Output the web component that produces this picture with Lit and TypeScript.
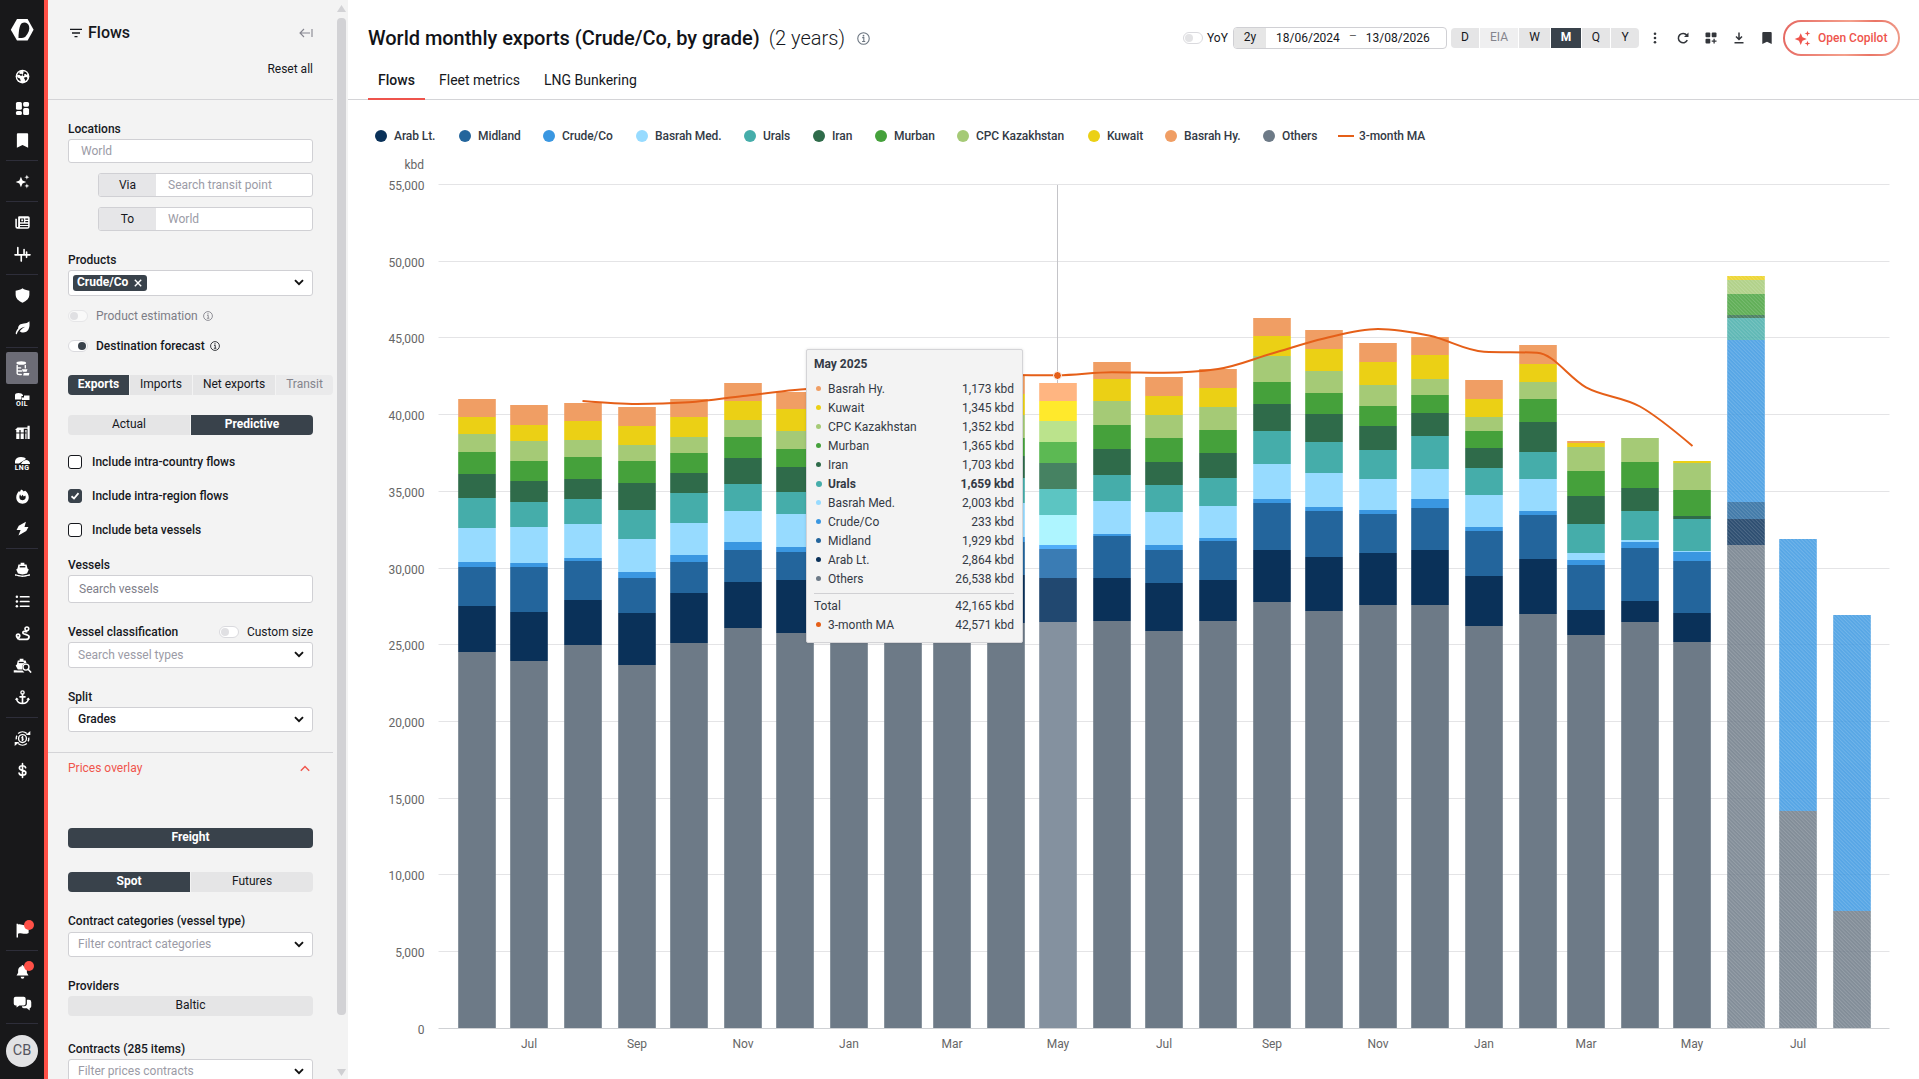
import { LitElement, html, svg, css, nothing } from "lit";
import { customElement } from "lit/decorators.js";
import { unsafeSVG } from "lit/directives/unsafe-svg.js";
import { classMap } from "lit/directives/class-map.js";

/* ---------- icons ---------- */

const ICONS: Record<string, string> = {
  logo: `<path d="M7 1h10.600l6 10.800-6 10.800H7L.8 11.800z"/><path fill="#18181a" d="M11.700 5.200C14.500 3.500 18 4.500 19 8c1 3.500-.5 7-3.300 10.200-1.500 1.700-4 1.900-7.200 1.800 0-5 .7-12.600 3.200-14.800z"/>`,
  globe: `<circle cx="12" cy="12" r="11"/><path fill="#18181a" d="M9 3.500 6.500 6l1.300 2 2.700-.5 1.500 2.500-2.500 1-2.500-2-3.500.5c-.3 2 .5 3.500 1.500 4.500l3 1.200 1.200 4.300c-1.500-.5-4-1.500-5.500-4.500A9.500 9.500 0 0 1 9 3.500zM13.500 3.500l4 1.300 2.500 3.200-1.500 1.500-1.200-1.500-2.800.4.500 2.300-1.500.8-1.500-2.500 1.500-2.500zM14.800 13.500l3.500-.8 1.700 1.500-1.500 3.300-2.500 1.700-.3-2.900-1.200-1.200z"/>`,
  dash: `<rect x="1.500" y="1.500" width="9.500" height="12.500" rx="2.500"/><rect x="13" y="1.500" width="9.500" height="7.500" rx="2.500"/><rect x="1.500" y="16" width="9.500" height="6.500" rx="2.500"/><rect x="13" y="11" width="9.500" height="11.500" rx="2.500"/>`,
  bookmark: `<path d="M4.500 .5h15A1.500 1.500 0 0 1 21 2v21.500l-9-4.500-9 4.500V2A1.500 1.500 0 0 1 4.500 .5z"/>`,
  sparkle: `<path d="M9.500 4.500 12 10.300l6 2.400-6 2.400-2.500 6-2.500-6-6-2.400 6-2.400zM19 1l1 2.900 3 1.100-3 1.100L19 9l-1-2.900L15 5l3-1.100zM19 15l1 2.900 3 1.100-3 1.100-1 2.900-1-2.900-3-1.100 3-1.100z"/>`,
  news: `<path fill-rule="evenodd" d="M6.500 2H21a2.500 2.500 0 0 1 2.500 2.500v14A3.500 3.500 0 0 1 20 22H4a3.500 3.500 0 0 1-3.500-3.500V6H3v12.300a1 1 0 0 0 2 0V3.500A1.500 1.500 0 0 1 6.500 2zM8 5.500v6h6.500v-6zm8.500 0v2H21v-2zm0 4v2H21v-2zM8 14v2h13v-2zm0 3.500v2h13v-2z"/><rect x="10" y="7" width="3" height="3"/>`,
  pulse: `<path fill="none" stroke="#fff" stroke-width="2.600" stroke-linecap="round" d="M0 12.500h24M4.500 1v11.500M10 12.500v10M14.500 4v8.500M18.500 8v8.500"/>`,
  shield: `<path d="M12 .5c3 2.200 6 3.200 11 3.700v6.300c0 6-4.500 10.500-11 13-6.500-2.500-11-7-11-13V4.200C6 3.700 9 2.700 12 .5z"/>`,
  leaf: `<path d="M23 2c1.400 11-2 18-10 18-2.500 0-4-.8-5.500-2 3-3.500 5.500-5.500 9-7.200-5 .8-9 3.200-12.300 8.200L2.600 23 1 21.500C1.500 18 3 15.500 5 13.500 5 8 9 5.800 14 5.500c4-.2 6-1 9-3.500z"/>`,
  barrel: `<ellipse cx="10" cy="3.200" rx="7.800" ry="2.800"/><path fill="none" stroke="#fff" stroke-width="2.200" stroke-linecap="round" d="M3.500 7v12.500q0 2 4 2H10M16.500 7v4M5 11h4M5.500 16h5"/><path d="M11 13h9l-1.500 4H12.500zM14 19h9l-1 4h-9z"/>`,
  silos: `<path d="M2 8h5v14.500H2zM9 8h5v14.500H9zM16.500 8h2v14.500h-2zM20 1h3.500v21.500H20zM0 8l4-4h16v2H14v2z"/><path fill="#18181a" d="M1 12h17.500v1.500H1z"/>`,
  fire: `<path fill-rule="evenodd" d="M9.500 1c2 0 3 1 4.300 3 .8-1 1.700-1.400 2.700-1.400C20.500 6 22 9.500 22 13.500c0 5.500-4.500 10-10 10s-10-4.500-10-10C2 9 4 6 6 3.500l2 1zM8 8.500c-2.200 5-.5 9.500 4.200 9.500 4 0 6-4 4.300-7.500L14 12l-2-3-2 3z"/>`,
  bolt: `<path d="M17.500 1 6 7.500 2.500 14.500H9L5.500 23 18 16l3.500-6.500h-6.300z"/>`,
  ship: `<path d="M9 1h6v3h3.500l1.500 6.500 2 1.500-2.800 6.500c-3 0-3.500 1.500-7.200 1.500s-4-1.500-7.200-1.500L2 12l2-1.500L5.500 4H9zM0 19.500c4 0 5.500 2 12 2s8-2 12-2V22c-4 0-5.500 1.800-12 1.800S4 22 0 22z"/><path fill="#18181a" d="M7.500 6.500h9v2.200h-9z"/>`,
  list: `<circle cx="3" cy="4.500" r="2"/><circle cx="3" cy="12" r="2"/><circle cx="3" cy="19.500" r="2"/><rect x="7.500" y="3.200" width="16" height="2.400" rx="1"/><rect x="7.500" y="10.800" width="16" height="2.400" rx="1"/><rect x="7.500" y="18.300" width="16" height="2.400" rx="1"/>`,
  route: `<circle cx="19" cy="4.500" r="3" fill="none" stroke="#fff" stroke-width="2.600"/><path fill="none" stroke="#fff" stroke-width="2.800" stroke-linecap="round" d="M18.500 9c-3-1-6-.5-6 2s10 2.500 10 6-3 4.500-5.500 4.500H7"/><path d="M5 11.500c2.600 0 4 1.800 4 4 0 2.600-2.500 5-4 7-1.500-2-4-4.400-4-7 0-2.200 1.400-4 4-4z"/><circle cx="5" cy="15.500" r="1.300" fill="#18181a"/>`,
  shipsearch: `<path d="M7.500 1h6v3H17l1.500 4.500C13 8 10 12 12 18.500H4.500L1 12l2-1.500L4.500 4h3zM-2 19.500c4 0 5.500.6 14 .6l3 3.200H-2z"/><path fill="#18181a" d="M6 6.200h8v2H6z"/><circle cx="17.500" cy="14.500" r="4.800" fill="#18181a" stroke="#fff" stroke-width="2.200"/><path stroke="#fff" stroke-width="2.600" stroke-linecap="round" d="m21 18 4 4.500"/>`,
  anchor: `<circle cx="12" cy="4" r="2.600" fill="none" stroke="#fff" stroke-width="2.200"/><path fill="none" stroke="#fff" stroke-width="2.600" stroke-linecap="round" d="M12 7v14M8 11h8M2.500 14.500c1 4.500 4.500 7 9.500 7s8.500-2.500 9.500-7"/><path d="m0 16 2.500-4L6 15zM24 16l-2.500-4L18 15z"/>`,
  coin: `<circle cx="12" cy="12" r="6.300" fill="none" stroke="#fff" stroke-width="2.200"/><path fill="none" stroke="#fff" stroke-width="1.800" d="M13.500 10c-2.500-1.500-3.500 1-1.500 2s1 3.300-1.500 2M12 8v8"/><path fill="none" stroke="#fff" stroke-width="2.200" d="M5 4A10.800 10.800 0 0 1 19 4M19 20a10.800 10.800 0 0 1-14 0M3 7.500a10 10 0 0 0-1 6M21 16.500a10 10 0 0 0 1-6"/><path d="M17 6.500h7.500V0zM7 17.500H-.5V24z"/>`,
  dollar: `<path fill="none" stroke="#fff" stroke-width="2.600" stroke-linecap="round" d="M12 1v22M17 7.500C16.500 5.500 15 4.400 12 4.400c-3.500 0-5 1.600-5 3.600 0 5.500 10.400 2 10.400 7.600 0 2.400-2 4-5.400 4-3.200 0-5-1.300-5.500-3.600"/>`,
  flag: `<path d="M2.500 1h2.300v1.500c4-1.500 7 1 10 1 2.500 0 4-.8 7-2V16c-3 1.400-5 1.700-8 1-3-.8-5.500-1.200-9 0v6H2.500z"/>`,
  bell: `<path d="M12 1.500c.9 0 1.500.6 1.500 1.500v.7c3.400.7 5.500 3.300 5.500 6.800v3.500l2.500 4.500H2.500L5 14v-3.500c0-3.500 2.100-6.100 5.500-6.800V3c0-.9.600-1.500 1.500-1.500zM9 20.500h6a3 3 0 0 1-6 0z"/>`,
  chat: `<path d="M1 1h13a3 3 0 0 1 3 3v8a3 3 0 0 1-3 3H7l-4.500 3.500V15H1a3 3 0 0 1-3-3V4a3 3 0 0 1 3-3z"/><path d="M19 6h3.500A3.500 3.500 0 0 1 26 9.500v7c0 1.800-1.200 3-2.500 3V23l-4.500-3.500h-5c-1.600 0-3-1-3-3H14.500c3 0 4.500-1.500 4.500-4z"/>`,
};

const icon = (name: string, size = 16, cls = "") =>
  html`<svg class="ico ${cls}" width=${size} height=${size} viewBox="0 0 24 24">${unsafeSVG(ICONS[name])}</svg>`;

const infoIcon = (size: number, color: string) => html`
  <svg class="ico" width=${size} height=${size} viewBox="0 0 12 12">
    <circle cx="6" cy="6" r="5.300" fill="none" stroke=${color} stroke-width="1" />
    <path d="M4.800 5.200h1.500v3.400M4.700 8.700h2.900" fill="none" stroke=${color} stroke-width="1" />
    <circle cx="6" cy="3.400" r="0.800" fill=${color} />
  </svg>`;

const chevron = html`<svg class="chev" width="10" height="7" viewBox="0 0 10 7">
  <path d="M1 1.200 5 5.200 9 1.200" fill="none" stroke="#111" stroke-width="1.900" />
</svg>`;

/* ---------- chart data ---------- */

const SERIES = [
  ["Basrah Hy.", "#f09e64", "#ffb581"],
  ["Kuwait", "#ebd015", "#ffe92c"],
  ["CPC Kazakhstan", "#a5ca76", "#bbe38c"],
  ["Murban", "#45a13b", "#5cb953"],
  ["Iran", "#2f6b4a", "#468262"],
  ["Urals", "#45adaa", "#5cc5c2"],
  ["Basrah Med.", "#97dbff", "#aef5ff"],
  ["Crude/Co", "#3a97e1", "#51aef9"],
  ["Midland", "#23659c", "#3a7cb4"],
  ["Arab Lt.", "#0a3159", "#214870"],
  ["Others", "#6d7a87", "#84919f"],
] as const;

/* Left edge, then the top of every stacked segment, in stage pixels. */
const BARS: number[][] = [
  [458, 399, 417, 434, 452, 474, 498, 528, 562, 567, 606, 652],
  [510, 405, 425, 441, 461, 481, 502, 527, 563, 567, 612, 661],
  [564, 403, 421, 440, 457, 479, 499, 524, 558, 561, 600, 645],
  [618, 407, 426, 445, 461, 483, 510, 539, 572, 578, 613, 665],
  [670, 399, 417, 437, 453, 473, 493, 523, 555, 562, 593, 643],
  [724, 383, 401, 420, 437, 458, 484, 511, 542, 550, 582, 628],
  [776, 392, 409, 431, 449, 467, 492, 514, 547, 552, 580, 633],
  [830, 390, 408, 428, 447, 466, 490, 513, 545, 550, 581, 630],
  [884, 386, 404, 424, 443, 462, 487, 511, 543, 548, 580, 629],
  [933, 384, 402, 422, 441, 460, 484, 508, 541, 547, 578, 627],
  [987, 376, 394, 415, 438, 456, 478, 503, 537, 542, 575, 623],
  [1039, 383, 401, 421, 442, 463, 489, 515, 545, 549, 578, 622],
  [1093, 362, 379, 401, 425, 449, 475, 501, 534, 536, 578, 621],
  [1145, 377, 396, 415, 438, 462, 485, 512, 545, 550, 583, 631],
  [1199, 369, 388, 407, 430, 453, 478, 506, 538, 541, 580, 621],
  [1253, 318, 336, 356, 382, 404, 431, 464, 499, 503, 550, 602],
  [1305, 330, 349, 371, 393, 414, 442, 473, 507, 511, 557, 611],
  [1359, 343, 362, 385, 406, 426, 450, 479, 510, 514, 553, 605],
  [1411, 337, 355, 379, 395, 413, 436, 469, 499, 508, 550, 605],
  [1465, 380, 399, 417, 431, 448, 468, 495, 527, 531, 576, 626],
  [1519, 345, 364, 382, 399, 422, 452, 479, 511, 515, 559, 614],
  [1567, 441, 443, 447, 471, 496, 524, 553, 560, 565, 610, 635],
  [1621, 438, 438, 438, 462, 488, 511, 540, 542, 548, 601, 622],
  [1673, 461, 461, 463, 490, 516, 519, 551, 552, 561, 613, 642],
  [1727, 276, 276, 280, 294, 315, 318, 340, 340, 502, 519, 545],
  [1779, 539, 539, 539, 539, 539, 539, 539, 539, 811, 811, 811],
  [1833, 615, 615, 615, 615, 615, 615, 615, 615, 911, 911, 911],
];
const HOVERED = 11;
const FORECAST_FROM = 24;
const BASE = 1028;
const BAR_W = 37.6;

const MA: [number, number][] = [
  [582.500, 401], [637, 404], [689, 402.300], [743, 396], [795, 390], [849, 387], [902, 382],
  [952, 377], [1006, 375], [1057.500, 375.300], [1112, 372.300], [1164, 372.800], [1218, 369],
  [1272, 353.500], [1324, 338.500], [1378, 329], [1430, 335.800], [1484, 351.700], [1537, 352.700],
  [1586, 387.300], [1640, 406.500], [1692.500, 446],
];

/* Cubic path whose tangents never overshoot the neighbouring points. */
function monotonePath(p: [number, number][]): string {
  const n = p.length;
  const h: number[] = [], s: number[] = [], t: number[] = [];
  for (let i = 0; i < n - 1; i++) {
    h.push(p[i + 1][0] - p[i][0]);
    s.push((p[i + 1][1] - p[i][1]) / h[i]);
  }
  for (let i = 1; i < n - 1; i++) {
    const m = (s[i - 1] * h[i] + s[i] * h[i - 1]) / (h[i - 1] + h[i]);
    t[i] = (Math.sign(s[i - 1]) + Math.sign(s[i])) * Math.min(Math.abs(s[i - 1]), Math.abs(s[i]), 0.500 * Math.abs(m)) || 0;
  }
  t[0] = (3 * s[0] - t[1]) / 2;
  t[n - 1] = (3 * s[n - 2] - t[n - 2]) / 2;
  let d = `M${p[0][0]} ${p[0][1]}`;
  for (let i = 0; i < n - 1; i++) {
    const k = h[i] / 3;
    d += `C${p[i][0] + k} ${p[i][1] + k * t[i]} ${p[i + 1][0] - k} ${p[i + 1][1] - k * t[i + 1]} ${p[i + 1][0]} ${p[i + 1][1]}`;
  }
  return d;
}

const MONTHS = ["Jul", "Sep", "Nov", "Jan", "Mar", "May", "Jul", "Sep", "Nov", "Jan", "Mar", "May", "Jul"];

const TIP_VALUES = ["1,173", "1,345", "1,352", "1,365", "1,703", "1,659", "2,003", "233", "1,929", "2,864", "26,538"];

/* ---------- navigation rail ---------- */

@customElement("nav-rail")
export class NavRail extends LitElement {
  static styles = css`
    :host { box-sizing: border-box; display: flex; flex-direction: column; align-items: center; width: 48px; height: 1079px; background: #18181a; border-right: 4px solid #ff5047; flex: none; font-family: Roboto, sans-serif; }
    .logo { height: 60px; display: flex; align-items: center; }
    .slot { width: 32px; height: 32px; display: flex; align-items: center; justify-content: center; border-radius: 2px; position: relative; flex: none; }
    .active { background: #6c6c76; }
    .ico { fill: #fff; overflow: visible; display: block; }
    .line { width: 32px; height: 1px; margin: 4px 0; background: #2e2e3a; flex: none; }
    .spacer { flex: 1; }
    .dot { position: absolute; width: 10px; height: 10px; border-radius: 50%; background: #ff5047; left: 18px; top: 6px; }
    .avatar { width: 32px; height: 32px; border-radius: 50%; background: #e2e2e4; color: #55555f; font-size: 14.500px; display: flex; align-items: center; justify-content: center; margin: 7px 0 12px; }
    .word { display: flex; flex-direction: column; align-items: center; }
    .word span { color: #fff; font-size: 7px; font-weight: 700; line-height: 7px; letter-spacing: 0.400px; }
  `;
  private slotFor(name: string, active = false, badge = false) {
    return html`<div class=${classMap({ slot: true, active })}>
      ${icon(name, 15)}${badge ? html`<span class="dot"></span>` : nothing}
    </div>`;
  }
  private tank(label: string) {
    return html`<div class="slot"><div class="word">
      <svg class="ico" width="15" height="8" viewBox="0 0 15 8">
        ${label === "OIL"
          ? svg`<path d="M0 2Q0 0 3.500 0T8 2L8 3H6.500V6.500H0zM9 2.500H14.500V7H7V4.500H9z"/>`
          : svg`<path d="M0 4Q1 0 6 0 10 0 11 2L4 6.500H0zM6 7Q8 3 12 3 15 4 15 7z"/>`}
      </svg><span>${label}</span></div></div>`;
  }
  render() {
    const line = html`<div class="line"></div>`;
    return html`
      <div class="logo">${icon("logo", 24)}</div>
      ${["globe", "dash", "bookmark"].map((n) => this.slotFor(n))}${line}
      ${this.slotFor("sparkle")}${line}
      ${this.slotFor("news")}${this.slotFor("pulse")}${line}
      ${this.slotFor("shield")}${this.slotFor("leaf")}${line}
      ${this.slotFor("barrel", true)}${this.tank("OIL")}${this.slotFor("silos")}${this.tank("LNG")}
      ${this.slotFor("fire")}${this.slotFor("bolt")}${line}
      ${["ship", "list", "route", "shipsearch", "anchor"].map((n) => this.slotFor(n))}${line}
      ${this.slotFor("coin")}${this.slotFor("dollar")}
      <div class="spacer"></div>
      ${this.slotFor("flag", false, true)}${line}
      ${this.slotFor("bell", false, true)}${this.slotFor("chat")}${line}
      <div class="avatar">CB</div>`;
  }
}

/* ---------- filter panel ---------- */

@customElement("filter-panel")
export class FilterPanel extends LitElement {
  static styles = css`
    :host { display: flex; width: 300px; height: 1079px; overflow: hidden; background: #f3f3f3; flex: none; font: 12px/16px Roboto, sans-serif; color: #16181d; }
    * { box-sizing: border-box; }
    .col { width: 285px; height: 1079px; overflow: hidden; flex: none; }
    .head { height: 100px; border-bottom: 1px solid #d4d4d7; padding: 23px 20px 0 22px; }
    .title { display: flex; align-items: center; height: 20px; font-size: 16px; font-weight: 500; }
    .title .t { margin-left: 6px; flex: 1; }
    .reset { text-align: right; margin-top: 18px; font-size: 12px; }
    .body { padding: 21px 20px 0; }
    .ico, .chev { display: block; flex: none; }
    .label { height: 16px; font-weight: 500; }
    .box { height: 24px; border: 1px solid #d0d0d4; border-radius: 3px; background: #fff; display: flex; align-items: center; padding: 0 8px 0 12px; color: #9b9ba6; width: 245px; }
    .box .grow { flex: 1; }
    .box.tall { height: 26px; padding: 0 8px 1px 9px; }
    .pair { width: 215px; margin: 10px 0 0 30px; padding: 0; overflow: hidden; }
    .pair .k { width: 57px; height: 22px; line-height: 22px; background: #e6e6e8; color: #16181d; text-align: center; margin-right: 12px; }
    .chip { background: #39424b; color: #fff; font-weight: 700; border-radius: 3px; height: 16px; line-height: 15px; display: flex; align-items: center; padding: 0 5px 0 4px; margin-left: -5px; }
    .chip svg { margin-left: 6px; }
    .row { display: flex; align-items: center; height: 16px; }
    .toggle { width: 20px; height: 12px; border: 1px solid #dadade; border-radius: 6px; background: #fff; position: relative; flex: none; }
    .toggle i { position: absolute; width: 8px; height: 8px; border-radius: 50%; background: #e0e0e3; left: 1px; top: 1px; }
    .toggle.on i { left: 9px; background: #39424b; }
    .toggle.faint { border-color: #e6e6e8; background: #f9f9f9; }
    .seg { display: flex; gap: 1px; height: 20px; border-radius: 4px; overflow: hidden; width: 245px; }
    .seg div { background: #e5e5e6; text-align: center; line-height: 19px; flex: 1; }
    .seg .on { background: #39424b; color: #fff; font-weight: 700; }
    .seg.four { width: 265px; }
    .seg.four div { flex: none; line-height: 18px; }
    .seg .off { color: #84848c; background: #eaeaeb; }
    .check { display: flex; align-items: center; height: 14px; font-weight: 500; }
    .check i { width: 14px; height: 14px; border: 1px solid #16181d; border-radius: 3px; background: #fff; margin-right: 10px; display: flex; }
    .check i.on { background: #39424b; border-color: #39424b; }
    .overlay { border-top: 1px solid #d4d4d7; margin: 20px -20px 0; padding: 7px 23px 0 20px; display: flex; align-items: center; justify-content: space-between; color: #f0554c; }
    .bar { width: 15px; height: 1079px; display: flex; flex-direction: column; align-items: center; padding: 5px 0 3px 1px; }
    .thumb { width: 9px; height: 997px; border-radius: 4px; background: #d2d2d5; margin-top: 6px; }
    .dark { color: #16181d; font-weight: 500; }
  `;
  private select(text: string, h: number, mt: number, extra = "") {
    return html`<div class="box tall" style="height:${h}px;margin-top:${mt}px"><span class="grow ${extra}">${text}</span>${chevron}</div>`;
  }
  private check(text: string, on: boolean, mt: number) {
    return html`<div class="check" style="margin-top:${mt}px"><i class=${on ? "on" : ""}>
      ${on ? html`<svg width="12" height="12" viewBox="0 0 12 12"><path d="M2.500 6.300 5 8.500l4.500-5.300" fill="none" stroke="#fff" stroke-width="1.800" /></svg>` : nothing}
      </i>${text}</div>`;
  }
  render() {
    return html`
      <div class="col">
        <div class="head">
          <div class="title">
            <svg class="ico" width="12" height="10" viewBox="0 0 12 10"><path d="M0 1.300h12M2 5h8M4.500 8.700h3" stroke="#16181d" stroke-width="1.300" /></svg>
            <span class="t">Flows</span>
            <svg class="ico" width="14" height="10" viewBox="0 0 14 10"><path d="M5 1 1 5l4 4M1 5h10M13 1v8" fill="none" stroke="#85858f" stroke-width="1.100" /></svg>
          </div>
          <div class="reset">Reset all</div>
        </div>
        <div class="body">
          <div class="label">Locations</div>
          <div class="box" style="margin-top:2px">World</div>
          <div class="box pair"><span class="k">Via</span>Search transit point</div>
          <div class="box pair"><span class="k">To</span>World</div>

          <div class="label" style="margin-top:21px">Products</div>
          <div class="box tall" style="margin-top:2px">
            <span class="chip">Crude/Co<svg width="8" height="8" viewBox="0 0 8 8"><path d="m.8.800 6.400 6.400M7.200.800.800 7.200" stroke="#fff" stroke-width="1.400" /></svg></span>
            <span class="grow"></span>${chevron}
          </div>
          <div class="row" style="margin-top:12px;color:#7d7d86"><span class="toggle faint"><i></i></span><span style="margin:0 5px 0 8px">Product estimation</span>${infoIcon(10, "#7d7d86")}</div>
          <div class="row" style="margin-top:14px;font-weight:500"><span class="toggle on"><i></i></span><span style="margin:0 5px 0 8px">Destination forecast</span>${infoIcon(10, "#16181d")}</div>

          <div class="seg four" style="margin-top:21px">
            <div class="on" style="width:61px">Exports</div><div style="width:62px">Imports</div><div style="width:82px">Net exports</div><div class="off" style="width:57px">Transit</div>
          </div>
          <div class="seg" style="margin-top:20px"><div>Actual</div><div class="on">Predictive</div></div>
          ${this.check("Include intra-country flows", false, 20)}
          ${this.check("Include intra-region flows", true, 20)}
          ${this.check("Include beta vessels", false, 20)}

          <div class="label" style="margin-top:20px">Vessels</div>
          <div class="box" style="margin-top:2px;height:28px;padding-left:10px;color:#80808a">Search vessels</div>
          <div class="row" style="margin-top:21px"><span class="label" style="flex:1">Vessel classification</span><span class="toggle"><i></i></span><span style="margin-left:8px">Custom size</span></div>
          ${this.select("Search vessel types", 26, 2)}
          <div class="label" style="margin-top:21px">Split</div>
          ${this.select("Grades", 25, 2, "dark")}

          <div class="overlay">Prices overlay
            <svg width="10" height="7" viewBox="0 0 10 7"><path d="M.8 5.800 5 1.500l4.200 4.300" fill="none" stroke="#f0554c" stroke-width="1.400" /></svg>
          </div>
          <div class="seg" style="margin-top:52px"><div class="on">Freight</div></div>
          <div class="seg" style="margin-top:24px"><div class="on">Spot</div><div>Futures</div></div>
          <div class="label" style="margin-top:21px">Contract categories (vessel type)</div>
          ${this.select("Filter contract categories", 25, 3)}
          <div class="label" style="margin-top:21px">Providers</div>
          <div class="seg" style="margin-top:2px"><div>Baltic</div></div>
          <div class="label" style="margin-top:25px">Contracts (285 items)</div>
          ${this.select("Filter prices contracts", 25, 2)}
        </div>
      </div>
      <div class="bar">
        <svg width="9" height="7" viewBox="0 0 9 7"><path d="M0 7 4.500 0 9 7z" fill="#d2d2d5" /></svg>
        <div class="thumb"></div>
        <span style="flex:1"></span>
        <svg width="9" height="7" viewBox="0 0 9 7"><path d="M0 0h9L4.500 7z" fill="#cfcfd2" /></svg>
      </div>`;
  }
}

/* ---------- chart ---------- */

@customElement("flow-chart")
export class FlowChart extends LitElement {
  static styles = css`
    :host { display: block; position: relative; width: 1571px; height: 921px; font: 12px/19px Roboto, sans-serif; color: #333a45; }
    .plot { display: block; }
    .axis { fill: #666; font-size: 12px; }
    .tip { position: absolute; left: 458px; top: 191px; width: 217px; height: 294px; box-sizing: border-box; background: #f3f3f3; border: 1px solid #d4d4d7; border-radius: 2px; padding: 5px 8px 0 7px; box-shadow: 0 0 3px rgba(0, 0, 0, 0.120); }
    .head { font-weight: 700; height: 25px; }
    .r { display: flex; align-items: center; height: 19px; }
    .r .d { width: 5px; height: 5px; border-radius: 50%; margin: 0 7px 2px 2px; }
    .r .n { flex: 1; }
    .r.b { font-weight: 700; }
    .r.b .d { width: 6px; height: 6px; margin-right: 6px; }
    .sep { height: 1px; background: #d0d0d3; margin: 4px 0 3px; }
  `;
  render() {
    return html`
      <svg class="plot" width="1571" height="921" viewBox="348 158 1571 921">
        <defs>
          <pattern id="hatch" width="2.600" height="2.600" patternUnits="userSpaceOnUse" patternTransform="rotate(-45)">
            <rect width="1" height="2.600" fill="#fff" fill-opacity="0.160" />
          </pattern>
        </defs>
        ${Array.from({ length: 12 }, (_, i) => {
          const y = Math.round(184 + i * 76.700) + 0.500;
          return svg`<path d="M438.500 ${y}H1889.500" stroke=${i === 11 ? "#cfd1d4" : "#e4e4e6"} />
            <text class="axis" x="424.500" y=${y + 5} text-anchor="end">${((11 - i) * 5000).toLocaleString("en-US")}</text>`;
        })}
        <text class="axis" x="424" y="169" text-anchor="end">kbd</text>
        <path d="M1057.500 185V383" stroke="#c4c4c8" />
        ${BARS.map((b, i) => {
          const fc = i >= FORECAST_FROM;
          const top = b[1];
          return svg`<g opacity=${fc ? 0.860 : 1}>${SERIES.map((s, k) => {
            const y0 = b[k + 1];
            const y1 = k === 10 ? BASE : b[k + 2];
            return y1 > y0
              ? svg`<rect x=${b[0] + 0.200} y=${y0} width=${BAR_W} height=${y1 - y0} fill=${i === HOVERED ? s[2] : s[1]} />`
              : nothing;
          })}</g>${fc ? svg`<rect x=${b[0] + 0.200} y=${top} width=${BAR_W} height=${BASE - top} fill="url(#hatch)" />` : nothing}`;
        })}
        <path d=${monotonePath(MA)} fill="none" stroke="#e55f18" stroke-width="2" />
        <circle cx="1057.500" cy="375.500" r="4" fill="#e55f18" stroke="#fff" stroke-width="1" />
        ${MONTHS.map((m, i) => svg`<text class="axis" x=${BARS[1 + i * 2][0] + 19} y="1048" text-anchor="middle">${m}</text>`)}
      </svg>
      <div class="tip">
        <div class="head">May 2025</div>
        ${SERIES.map(([name, color], i) => html`<div class=${classMap({ r: true, b: name === "Urals" })}>
          <span class="d" style="background:${color}"></span><span class="n">${name}</span><span>${TIP_VALUES[i]} kbd</span></div>`)}
        <div class="sep"></div>
        <div class="r"><span class="n">Total</span><span>42,165 kbd</span></div>
        <div class="r"><span class="d" style="background:#e55f18"></span><span class="n">3-month MA</span><span>42,571 kbd</span></div>
      </div>`;
  }
}

/* ---------- page ---------- */

@customElement("app-root")
export class AppRoot extends LitElement {
  static styles = css`
    :host { display: flex; width: 1919px; height: 1079px; overflow: hidden; background: #fff; font: 12px/16px Roboto, sans-serif; color: #16181d; }
    * { box-sizing: border-box; }
    main { flex: 1; min-width: 0; display: flex; flex-direction: column; }
    .ico { display: block; flex: none; }
    .top { height: 61px; display: flex; align-items: center; padding: 15px 19px 0 20px; flex: none; }
    h1 { font-size: 20px; line-height: 24px; font-weight: 500; letter-spacing: -0.030px; margin: 0 9px 0 0; color: #111318; white-space: nowrap; }
    .yrs { font-size: 20px; line-height: 24px; font-weight: 300; margin-right: 12px; white-space: nowrap; }
    .fill { flex: 1; }
    .toggle { width: 20px; height: 12px; border: 1px solid #dadade; border-radius: 6px; padding: 1px; margin-right: 4px; }
    .toggle i { display: block; width: 8px; height: 8px; border-radius: 50%; background: #e3e3e5; }
    .yoy { width: 26px; }
    .dates { width: 214px; height: 22px; border: 1px solid #d0d0d4; border-radius: 4px; display: flex; overflow: hidden; line-height: 20px; margin-right: 4px; }
    .dates .q { width: 32px; background: #e6e6e6; text-align: center; margin-right: 10px; line-height: 18px; }
    .dates .dash { width: 26px; text-align: center; color: #666; line-height: 17px; }
    .gran { display: flex; gap: 1px; height: 20px; border-radius: 4px; overflow: hidden; line-height: 18px; text-align: center; }
    .gran div { background: #e5e5e6; }
    .gran .off { background: #efeff0; color: #84848c; }
    .gran .on { background: #39424b; color: #fff; font-weight: 700; }
    .tools { display: flex; width: 144px; padding-left: 10px; }
    .tools svg { width: 12px; height: 12px; margin-right: 16px; flex: none; fill: #33363b; overflow: visible; }
    .copilot { width: 117px; height: 36px; border-radius: 18px; border: 2px solid transparent; background: linear-gradient(#fff, #fff) padding-box, linear-gradient(100deg, #e56660, #f4a08c 55%, #ea7566 75%, #f0a08e) border-box; display: flex; align-items: center; padding-left: 9px; color: #ee544c; font-weight: 500; flex: none; white-space: nowrap; }
    .copilot svg { fill: #ee544c; margin-right: 7px; }
    .tabs { height: 39px; display: flex; border-bottom: 1px solid #d4d4d7; padding-left: 20px; font-size: 14px; line-height: 38px; flex: none; }
    .tab { margin-right: 24px; }
    .tab.on { width: 57px; text-align: center; font-weight: 500; border-bottom: 2px solid #ee544c; height: 39px; margin-right: 14px; }
    .legend { display: flex; height: 58px; padding: 15px 0 0 27px; color: #333a45; font-weight: 500; letter-spacing: -0.080px; flex: none; }
    .item { display: flex; align-items: center; height: 42px; white-space: nowrap; flex: none; }
    .item i { width: 12px; height: 12px; border-radius: 50%; margin-right: 7px; flex: none; }
    .item i.l { width: 16px; height: 2px; border-radius: 0; background: #e55f18; margin-right: 5px; }
  `;
  render() {
    const legend: [string, number][] = [
      ["Arab Lt.", 84], ["Midland", 84], ["Crude/Co", 93], ["Basrah Med.", 108], ["Urals", 69], ["Iran", 62],
      ["Murban", 82], ["CPC Kazakhstan", 131], ["Kuwait", 77], ["Basrah Hy.", 98], ["Others", 75],
    ];
    const colors = new Map(SERIES.map((s) => [s[0] as string, s[1] as string]));
    const gran: [string, number, string][] = [["D", 28, ""], ["EIA", 38, "off"], ["W", 31, ""], ["M", 30, "on"], ["Q", 28, ""], ["Y", 28, ""]];
    return html`
      <nav-rail></nav-rail>
      <filter-panel></filter-panel>
      <main>
        <div class="top">
          <h1>World monthly exports (Crude/Co, by grade)</h1>
          <span class="yrs">(2 years)</span>
          ${infoIcon(13, "#6b7580")}
          <span class="fill"></span>
          <span class="toggle"><i></i></span><span class="yoy">YoY</span>
          <div class="dates"><span class="q">2y</span><span>18/06/2024</span><span class="dash">–</span><span>13/08/2026</span></div>
          <div class="gran">${gran.map(([t, w, c]) => html`<div class=${c} style="width:${w}px">${t}</div>`)}</div>
          <div class="tools">
            <svg viewBox="0 0 12 12"><circle cx="6" cy="1.800" r="1.300" /><circle cx="6" cy="6" r="1.300" /><circle cx="6" cy="10.200" r="1.300" /></svg>
            <svg viewBox="0 0 12 12"><path d="M10.300 8.200A4.700 4.700 0 1 1 9.800 3.200" fill="none" stroke="#33363b" stroke-width="1.500" /><path d="M11.500.500V5H7z" /></svg>
            <svg viewBox="0 0 12 12"><rect x="0.500" y="0.500" width="4.800" height="4.800" rx="1" /><rect x="6.700" y="0.500" width="4.800" height="4.800" rx="1" /><rect x="0.500" y="6.700" width="4.800" height="4.800" rx="1" /><path d="M9.100 6.700v4.800M6.700 9.100h4.800" stroke="#33363b" stroke-width="1.300" /></svg>
            <svg viewBox="0 0 12 12"><path d="M6 .5v6.500M3 4.500l3 3 3-3M1.500 10.700h9" fill="none" stroke="#33363b" stroke-width="1.500" /></svg>
            <svg viewBox="0 0 12 12"><path d="M2.300 0h7.400q1 0 1 1v11L6 9.700 1.300 12V1q0-1 1-1z" /></svg>
          </div>
          <div class="copilot">${icon("sparkle", 17)}Open Copilot</div>
        </div>
        <div class="tabs"><span class="tab on">Flows</span><span class="tab">Fleet metrics</span><span class="tab">LNG Bunkering</span></div>
        <div class="legend">
          ${legend.map(([n, w]) => html`<span class="item" style="width:${w}px"><i style="background:${colors.get(n)}"></i>${n}</span>`)}
          <span class="item"><i class="l"></i>3-month MA</span>
        </div>
        <flow-chart></flow-chart>
      </main>`;
  }
}
